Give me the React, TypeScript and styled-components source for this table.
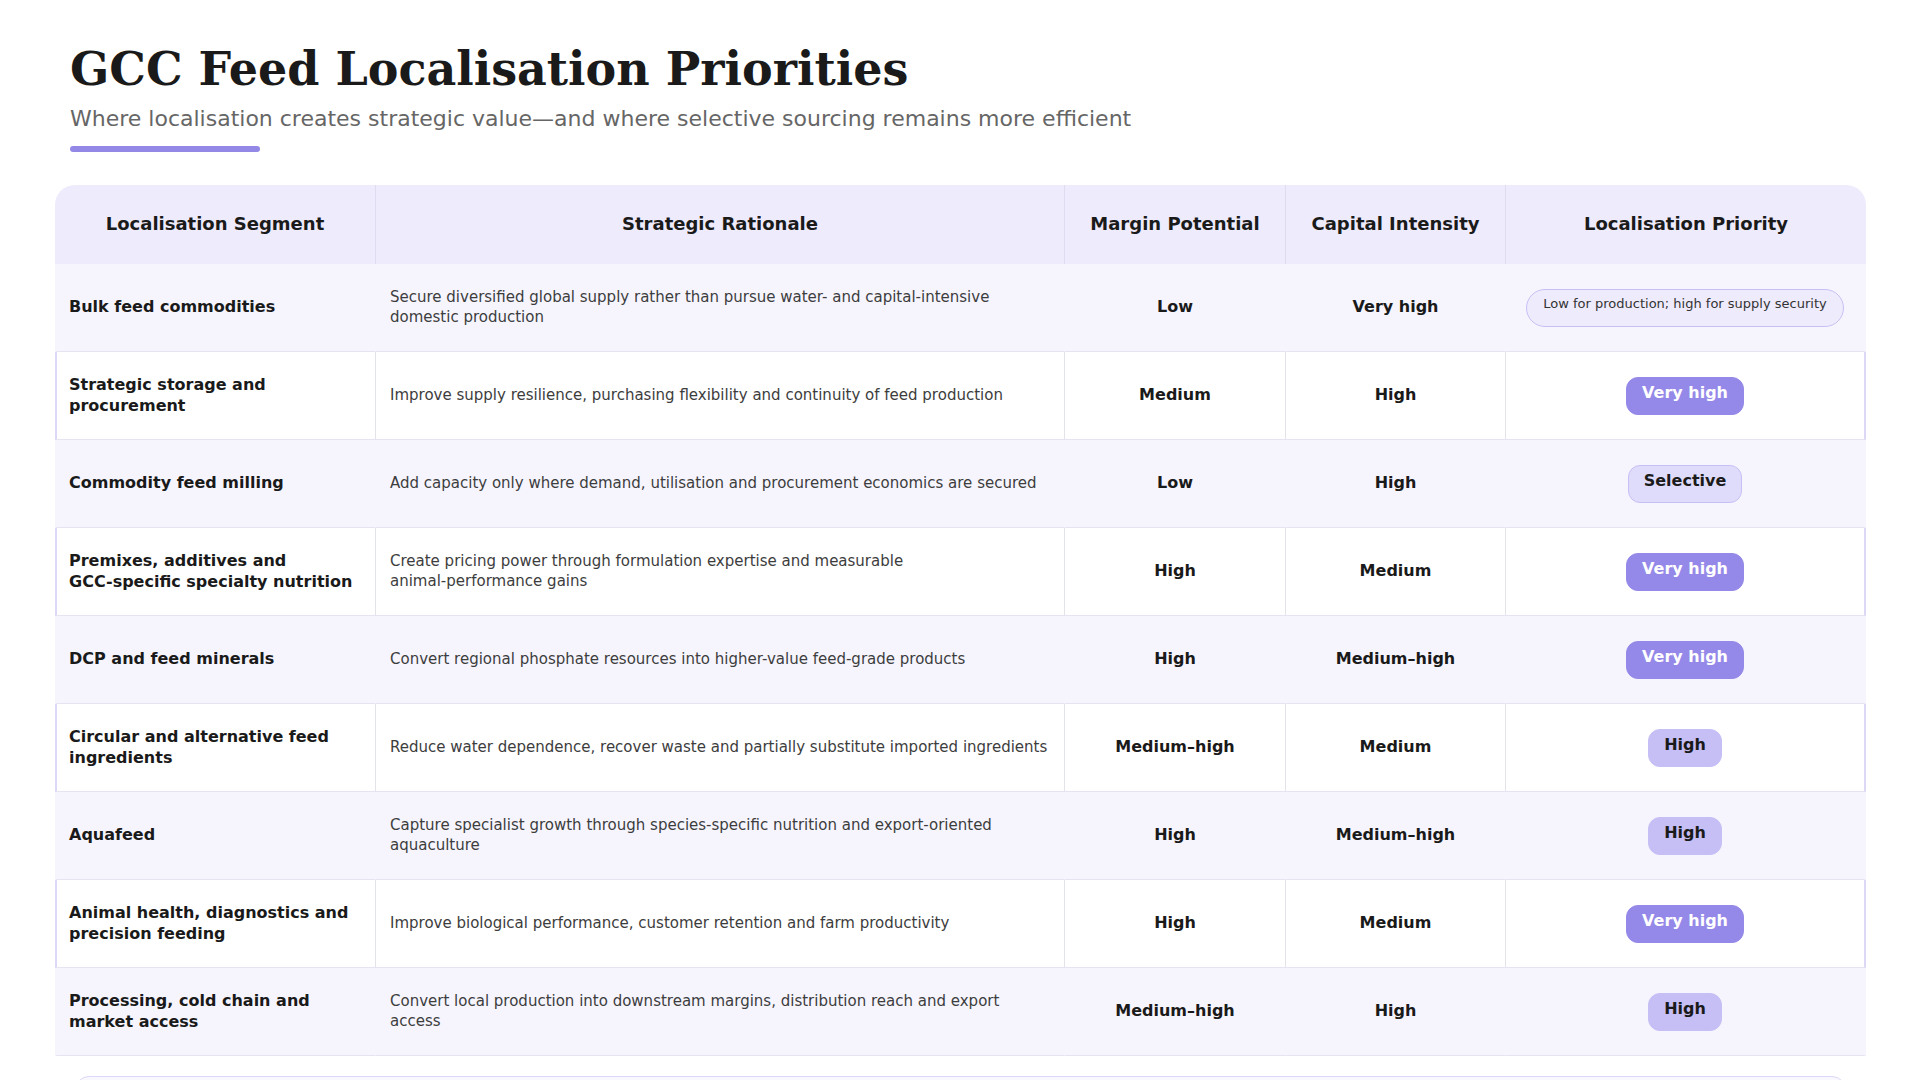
import React from 'react';
import styled, { createGlobalStyle } from 'styled-components';

const GlobalStyle = createGlobalStyle`
  body {
    margin: 0;
    background: #fff;
    font-family: "DejaVu Sans", "Liberation Sans", sans-serif;
    color: #1a1a1a;
  }
`;

const Page = styled.div`
  padding: 42px 54px 0 55px;
`;

const Header = styled.header`
  padding-left: 15px;
`;

const Title = styled.h1`
  margin: 0;
  font-family: "DejaVu Serif", "Liberation Serif", serif;
  font-size: 46px;
  font-weight: 700;
  line-height: normal;
  color: #1a1a1a;
`;

const Subtitle = styled.p`
  margin: 10px 0 0;
  font-size: 22px;
  line-height: normal;
  color: #666;
`;

const AccentBar = styled.div`
  margin-top: 15px;
  width: 190px;
  height: 6px;
  border-radius: 3px;
  background: #9488e6;
`;

const Table = styled.table`
  margin-top: 33px;
  width: 100%;
  table-layout: fixed;
  border-collapse: separate;
  border-spacing: 0;
`;

const HeadCell = styled.th`
  height: 79px;
  box-sizing: border-box;
  padding: 0 14px 2px;
  background: #eeebfc;
  font-size: 18px;
  font-weight: 700;
  text-align: center;
  color: #1a1a1a;
  border-right: 1px solid #dfdcf0;

  &:first-child {
    border-top-left-radius: 20px;
  }
  &:last-child {
    border-right: none;
    border-top-right-radius: 20px;
  }
`;

const Row = styled.tr<{ $alt: boolean }>`
  height: 88px;
  background: ${(p) => (p.$alt ? '#fff' : '#f6f5fe')};

  & > td {
    border-bottom: 1px solid #e6e4f0;
    border-right: 1px solid ${(p) => (p.$alt ? '#e3e4ea' : 'transparent')};
  }
  & > td:first-child {
    padding-left: 12px;
    border-left: 2px solid ${(p) => (p.$alt ? '#dcd8f5' : 'transparent')};
  }
  & > td:last-child {
    border-right: 2px solid ${(p) => (p.$alt ? '#dcd8f5' : 'transparent')};
  }
`;

const Cell = styled.td<{ $kind: 'segment' | 'rationale' | 'value' | 'priority' }>`
  box-sizing: border-box;
  padding: 0 14px;
  vertical-align: middle;
  text-align: ${(p) => (p.$kind === 'value' || p.$kind === 'priority' ? 'center' : 'left')};
  font-size: ${(p) => (p.$kind === 'rationale' ? '15px' : '16px')};
  font-weight: ${(p) => (p.$kind === 'rationale' ? 400 : 700)};
  line-height: 1.3;
  color: ${(p) => (p.$kind === 'rationale' ? '#3d3d3d' : '#1a1a1a')};
`;

// hyphenated words stay on one line, as in the original layout
const Word = styled.span`
  white-space: nowrap;
`;

type Level = 'veryhigh' | 'high' | 'selective' | 'note';

const badgeColors: Record<Level, { bg: string; border: string; fg: string }> = {
  veryhigh: { bg: '#9488e8', border: '#9488e8', fg: '#fff' },
  high: { bg: '#c5bff5', border: '#c5bff5', fg: '#1a1a1a' },
  selective: { bg: '#dfdcfb', border: '#c7c0f6', fg: '#1a1a1a' },
  note: { bg: '#eeebfc', border: '#c8c0f5', fg: '#333' },
};

const Badge = styled.span<{ $level: Level }>`
  display: inline-block;
  box-sizing: border-box;
  border: 1px solid ${(p) => badgeColors[p.$level].border};
  background: ${(p) => badgeColors[p.$level].bg};
  color: ${(p) => badgeColors[p.$level].fg};
  line-height: normal;
  white-space: nowrap;
  font-size: ${(p) => (p.$level === 'note' ? '13px' : '16px')};
  font-weight: ${(p) => (p.$level === 'note' ? 400 : 700)};
  padding: ${(p) => (p.$level === 'note' ? '6px 16px 15px' : '5px 15px 12px')};
  border-radius: ${(p) => (p.$level === 'note' ? '19px' : '12px')};
`;

// legend panel below the table; only its top edge falls inside the frame
const NoteBox = styled.div`
  margin: 20px 20px 0;
  min-height: 72px;
  border: 1px solid #dcd8f5;
  border-radius: 14px;
  background: #f9f8ff;
`;

type Item = {
  segment: string;
  rationale: string;
  margin: string;
  capital: string;
  priority: string;
  level: Level;
};

const rows: Item[] = [
  {
    segment: 'Bulk feed commodities',
    rationale: 'Secure diversified global supply rather than pursue water- and capital-intensive domestic production',
    margin: 'Low',
    capital: 'Very high',
    priority: 'Low for production; high for supply security',
    level: 'note',
  },
  {
    segment: 'Strategic storage and procurement',
    rationale: 'Improve supply resilience, purchasing flexibility and continuity of feed production',
    margin: 'Medium',
    capital: 'High',
    priority: 'Very high',
    level: 'veryhigh',
  },
  {
    segment: 'Commodity feed milling',
    rationale: 'Add capacity only where demand, utilisation and procurement economics are secured',
    margin: 'Low',
    capital: 'High',
    priority: 'Selective',
    level: 'selective',
  },
  {
    segment: 'Premixes, additives and GCC-specific specialty nutrition',
    rationale: 'Create pricing power through formulation expertise and measurable animal-performance gains',
    margin: 'High',
    capital: 'Medium',
    priority: 'Very high',
    level: 'veryhigh',
  },
  {
    segment: 'DCP and feed minerals',
    rationale: 'Convert regional phosphate resources into higher-value feed-grade products',
    margin: 'High',
    capital: 'Medium–high',
    priority: 'Very high',
    level: 'veryhigh',
  },
  {
    segment: 'Circular and alternative feed ingredients',
    rationale: 'Reduce water dependence, recover waste and partially substitute imported ingredients',
    margin: 'Medium–high',
    capital: 'Medium',
    priority: 'High',
    level: 'high',
  },
  {
    segment: 'Aquafeed',
    rationale: 'Capture specialist growth through species-specific nutrition and export-oriented aquaculture',
    margin: 'High',
    capital: 'Medium–high',
    priority: 'High',
    level: 'high',
  },
  {
    segment: 'Animal health, diagnostics and precision feeding',
    rationale: 'Improve biological performance, customer retention and farm productivity',
    margin: 'High',
    capital: 'Medium',
    priority: 'Very high',
    level: 'veryhigh',
  },
  {
    segment: 'Processing, cold chain and market access',
    rationale: 'Convert local production into downstream margins, distribution reach and export access',
    margin: 'Medium–high',
    capital: 'High',
    priority: 'High',
    level: 'high',
  },
];

function keepHyphenated(text: string) {
  return text.split(' ').map((w, i, all) => {
    const tail = i < all.length - 1 ? ' ' : '';
    if (/\w-\w/.test(w)) {
      return (
        <React.Fragment key={i}>
          <Word>{w}</Word>
          {tail}
        </React.Fragment>
      );
    }
    return w + tail;
  });
}

export default function App() {
  return (
    <>
      <GlobalStyle />
      <Page>
        <Header>
          <Title>GCC Feed Localisation Priorities</Title>
          <Subtitle>Where localisation creates strategic value—and where selective sourcing remains more efficient</Subtitle>
          <AccentBar />
        </Header>

        <Table>
          <colgroup>
            <col style={{ width: 321 }} />
            <col style={{ width: 689 }} />
            <col style={{ width: 221 }} />
            <col style={{ width: 220 }} />
            <col style={{ width: 360 }} />
          </colgroup>
          <thead>
            <tr>
              <HeadCell>Localisation Segment</HeadCell>
              <HeadCell>Strategic Rationale</HeadCell>
              <HeadCell>Margin Potential</HeadCell>
              <HeadCell>Capital Intensity</HeadCell>
              <HeadCell>Localisation Priority</HeadCell>
            </tr>
          </thead>
          <tbody>
            {rows.map((r, i) => (
              <Row key={r.segment} $alt={i % 2 === 1}>
                <Cell $kind="segment">{keepHyphenated(r.segment)}</Cell>
                <Cell $kind="rationale">{keepHyphenated(r.rationale)}</Cell>
                <Cell $kind="value">{r.margin}</Cell>
                <Cell $kind="value">{r.capital}</Cell>
                <Cell $kind="priority">
                  <Badge $level={r.level}>{r.priority}</Badge>
                </Cell>
              </Row>
            ))}
          </tbody>
        </Table>

        <NoteBox />
      </Page>
    </>
  );
}
